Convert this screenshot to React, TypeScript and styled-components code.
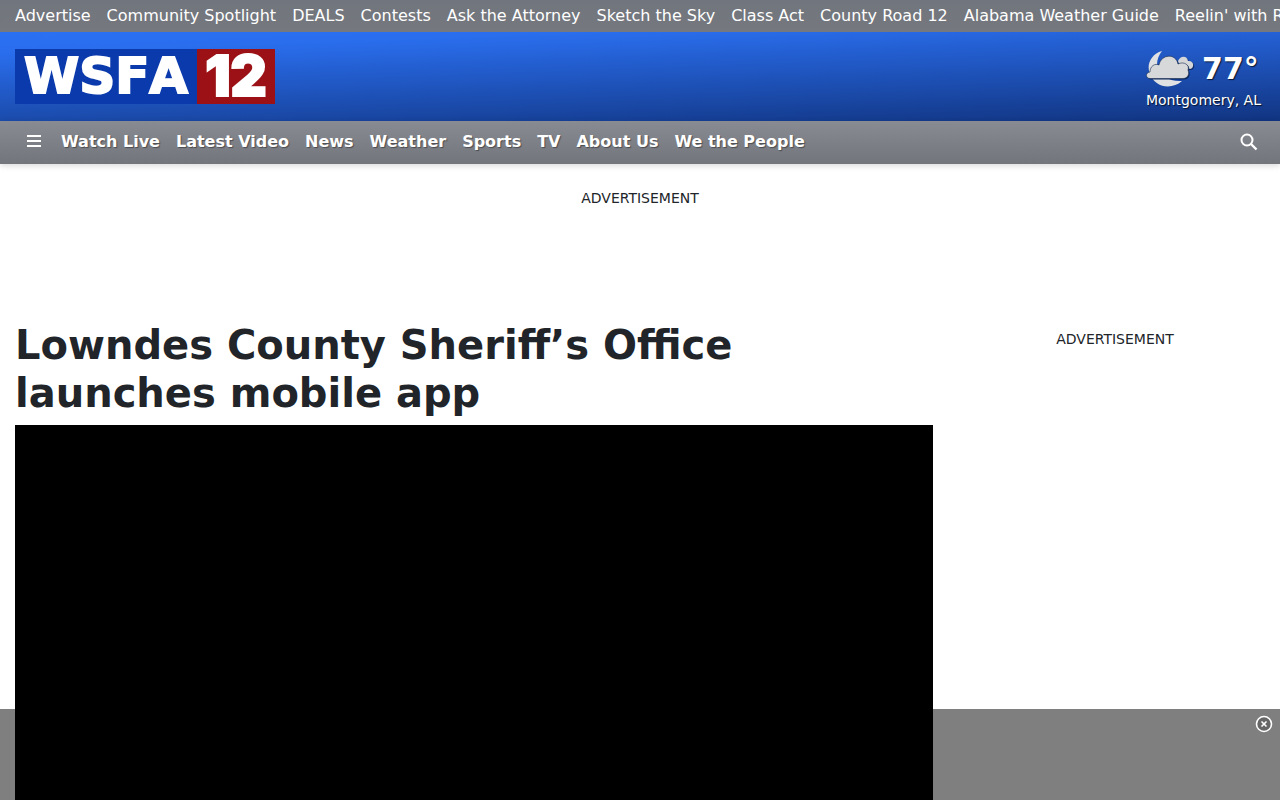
import React from "react";
import styled, { createGlobalStyle } from "styled-components";

const GlobalStyle = createGlobalStyle`
  *, *::before, *::after { box-sizing: border-box; }
  body {
    margin: 0;
    background: #fff;
    color: #212529;
    font: 16px/24px "DejaVu Sans", sans-serif;
  }
  a { color: inherit; text-decoration: none; }
  button { padding: 0; border: 0; background: none; color: inherit; cursor: pointer; }
`;

const TopBar = styled.nav`
  display: flex;
  gap: 16px;
  height: 32px;
  padding: 4px 15px;
  overflow: hidden;
  white-space: nowrap;
  background: linear-gradient(to bottom, #71757d, #75787e);
  color: #fff;
`;

const Masthead = styled.header`
  display: flex;
  align-items: center;
  justify-content: space-between;
  height: 89px;
  padding: 0 19px 0 15px;
  background: linear-gradient(178deg, #2a70f3 0%, #2a6eee 15%, #113480 100%);
  color: #fff;
`;

const Logo = styled.a`
  display: flex;
  width: 260px;
  height: 55px;
  line-height: 55px;
  text-align: center;
  font-kerning: none;
  -webkit-text-stroke: 2px #fff;
`;

const LogoName = styled.span`
  flex: 1;
  background: #0b3aad;
  font-size: 50px;
  font-weight: 700;
`;

const LogoNumber = styled.span`
  width: 78px;
  background: #9b1115;
  font-family: Inter, sans-serif;
  font-size: 56px;
  font-weight: 900;
`;

const Weather = styled.a`
  display: flex;
  flex-direction: column;
  align-items: center;
  padding-top: 4px;
  font-size: 14px;
  line-height: 20px;
  text-shadow: 1px 1px 1px rgba(0, 0, 0, 0.7);
`;

const Conditions = styled.span`
  display: flex;
  align-items: center;
  gap: 6px;
  height: 42px;
  padding-right: 2px;
`;

const Temperature = styled.strong`
  font-size: 30px;
  line-height: 36px;
`;

const MainNav = styled.nav`
  display: flex;
  align-items: center;
  justify-content: space-between;
  height: 43px;
  padding: 0 22px 2px 27px;
  background: linear-gradient(to bottom, #888b92, #72757c);
  box-shadow: 0 2px 6px rgba(0, 0, 0, 0.15);
  color: #fff;
  font-weight: 700;
  text-shadow: 1px 1px 1px rgba(0, 0, 0, 0.4);
`;

const NavLinks = styled.div`
  display: flex;
  align-items: center;
  gap: 16px;
`;

const MenuButton = styled.button`
  display: flex;
  width: 18px;
  height: 24px;
  align-items: center;
`;

const SearchButton = styled.button`
  display: flex;
  width: 18px;
  height: 18px;
`;

const AdLabel = styled.p`
  margin: 0;
  font-size: 14px;
  line-height: 20px;
  text-align: center;
`;

const LeaderboardAd = styled.aside`
  height: 157px;
  padding-top: 24px;
`;

const Page = styled.div`
  display: grid;
  grid-template-columns: minmax(0, 1fr) 300px;
  gap: 32px;
  padding: 0 15px;
`;

const Rail = styled.aside`
  padding-top: 8px;
`;

const Headline = styled.h1`
  margin: 0 0 8px;
  font-size: 40px;
  line-height: 48px;
`;

const Player = styled.div`
  aspect-ratio: 16 / 9;
  background: #000;
`;

const StickyAd = styled.aside`
  position: fixed;
  right: 0;
  bottom: 0;
  left: 0;
  display: flex;
  justify-content: flex-end;
  align-items: flex-start;
  height: 91px;
  padding: 6px 7px;
  background: rgba(0, 0, 0, 0.5);
`;

const CloseButton = styled.button`
  display: flex;
`;

const topLinks = [
  "Advertise", "Community Spotlight", "DEALS", "Contests", "Ask the Attorney",
  "Sketch the Sky", "Class Act", "County Road 12", "Alabama Weather Guide", "Reelin' with Ronnie",
];

const sections = ["Watch Live", "Latest Video", "News", "Weather", "Sports", "TV", "About Us", "We the People"];

function CloudyNightIcon() {
  const cloud = "M4 29.500C-.5 29.500-1 23.500 4 23C4 17 9 14 13 16C15 5 30 4 32 15C38 12 44 16 42 21C44 26 41 29.500 37 29.500Z";
  return (
    <svg width="50" height="40" viewBox="0 0 50 40" aria-hidden="true">
      <path d="M16 2C5 5 0 16 4 25C9 39 26 41 36 32C24 33 12 26 11 16C11 10 13 6 16 2Z" fill="#e0e1e2" />
      <path d="M32 12C34 7 41 6 42 12C48 11 49 19 44 20H35Z" transform="translate(1 1)" fill="#0b2968" />
      <path d="M32 12C34 7 41 6 42 12C48 11 49 19 44 20H35Z" fill="#d4d6d8" />
      <path d={cloud} transform="translate(1 1)" fill="#08265f" />
      <path d={cloud} fill="#d7d8d9" stroke="#15284d" strokeWidth=".6" />
    </svg>
  );
}

export default function App() {
  return (
    <>
      <GlobalStyle />
      <TopBar aria-label="Promotions">
        {topLinks.map((label) => <a href="#" key={label}>{label}</a>)}
      </TopBar>
      <Masthead>
        <Logo href="#" aria-label="WSFA 12">
          <LogoName>WSFA</LogoName>
          <LogoNumber>12</LogoNumber>
        </Logo>
        <Weather href="#">
          <Conditions>
            <CloudyNightIcon />
            <Temperature>77°</Temperature>
          </Conditions>
          <span>Montgomery, AL</span>
        </Weather>
      </Masthead>
      <MainNav aria-label="Sections">
        <NavLinks>
          <MenuButton aria-label="Menu">
            <svg width="14" height="14" viewBox="0 0 14 14" stroke="currentColor" strokeWidth="2">
              <path d="M0 1H14M0 6H14M0 11H14" />
            </svg>
          </MenuButton>
          {sections.map((label) => <a href="#" key={label}>{label}</a>)}
        </NavLinks>
        <SearchButton aria-label="Search">
          <svg width="18" height="18" viewBox="0 0 18 18" fill="none" stroke="currentColor" strokeWidth="2">
            <circle cx="7" cy="7" r="5.500" />
            <path d="M11 11L16.500 16.500" strokeWidth="2.400" />
          </svg>
        </SearchButton>
      </MainNav>
      <LeaderboardAd><AdLabel>ADVERTISEMENT</AdLabel></LeaderboardAd>
      <Page>
        <main>
          <Headline>Lowndes County Sheriff’s Office launches mobile app</Headline>
          <Player />
        </main>
        <Rail><AdLabel>ADVERTISEMENT</AdLabel></Rail>
      </Page>
      <StickyAd>
        <CloseButton aria-label="Close advertisement">
          <svg width="18" height="18" viewBox="0 0 18 18" fill="none" stroke="#fff">
            <circle cx="9" cy="9" r="7.500" fill="#666" strokeWidth="1.600" />
            <path d="M6.500 6.500L11.500 11.500M11.500 6.500L6.500 11.500" strokeWidth="1.600" />
          </svg>
        </CloseButton>
      </StickyAd>
    </>
  );
}
